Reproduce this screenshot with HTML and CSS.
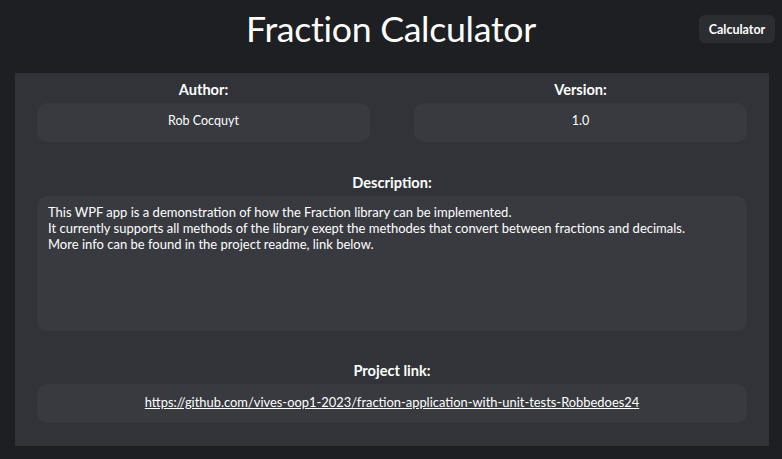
FILE: index.html
```html
<!DOCTYPE html>
<html>
<head>
<meta charset="utf-8">
<link rel="stylesheet" href="styles.css">
</head>
<body>
<header class="top">
  <h1 class="title">Fraction Calculator</h1>
  <button class="nav-btn">Calculator</button>
</header>
<main class="panel">
  <div class="row two">
    <section class="field">
      <div class="label">Author:</div>
      <div class="box small">Rob Cocquyt</div>
    </section>
    <section class="field">
      <div class="label">Version:</div>
      <div class="box small">1.0</div>
    </section>
  </div>
  <section class="field desc-field">
    <div class="label">Description:</div>
    <div class="box desc">This WPF app is a demonstration of how the Fraction library can be implemented.<br>It currently supports all methods of the library exept the methodes that convert between fractions and decimals.<br>More info can be found in the project readme, link below.</div>
  </section>
  <section class="field link-field">
    <div class="label">Project link:</div>
    <div class="box small"><a class="link" href="#">https://github.com/vives-oop1-2023/fraction-application-with-unit-tests-Robbedoes24</a></div>
  </section>
</main>
</body>
</html>
```
FILE: styles.css
```css
* { box-sizing: border-box; }
html, body { margin: 0; padding: 0; }
body {
  background: #1e1f22;
  color: #ffffff;
  font-family: Lato, "Open Sans", sans-serif;
  width: 782px;
  height: 459px;
  overflow: hidden;
}
.top {
  position: relative;
  height: 73px;
  display: flex;
  justify-content: center;
}
.title {
  margin: 9px 0 0 0;
  font-weight: 400;
  font-size: 35.7px;
  line-height: 40px;
  letter-spacing: -0.3px;
}
.nav-btn {
  position: absolute;
  right: 7px;
  top: 15px;
  width: 76px;
  height: 28px;
  border: none;
  border-radius: 6px;
  background: #2b2d31;
  color: #fff;
  font-family: inherit;
  font-weight: 700;
  font-size: 12.5px;
  padding: 0;
}
.panel {
  margin: 0 13px 0 15px;
  height: 373px;
  background: #313338;
  padding: 6px 22px 0 22px;
}
.row.two {
  display: grid;
  grid-template-columns: 1fr 1fr;
  column-gap: 44px;
}
.label {
  text-align: center;
  font-weight: 700;
  font-size: 14.6px;
  line-height: 22px;
  margin-bottom: 2px;
}
.box {
  background: #383a40;
  border-radius: 10px;
  font-size: 12.5px;
}
.box.small {
  height: 39px;
  display: flex;
  align-items: center;
  justify-content: center;
  padding-bottom: 4px;
}
.desc-field { margin-top: 30px; }
.box.desc {
  height: 135px;
  padding: 8px 11px;
  line-height: 16px;
  font-size: 13px;
}
.link-field { margin-top: 29px; }
.link {
  color: #fff;
  text-decoration: underline;
  font-size: 12.9px;
}
```
